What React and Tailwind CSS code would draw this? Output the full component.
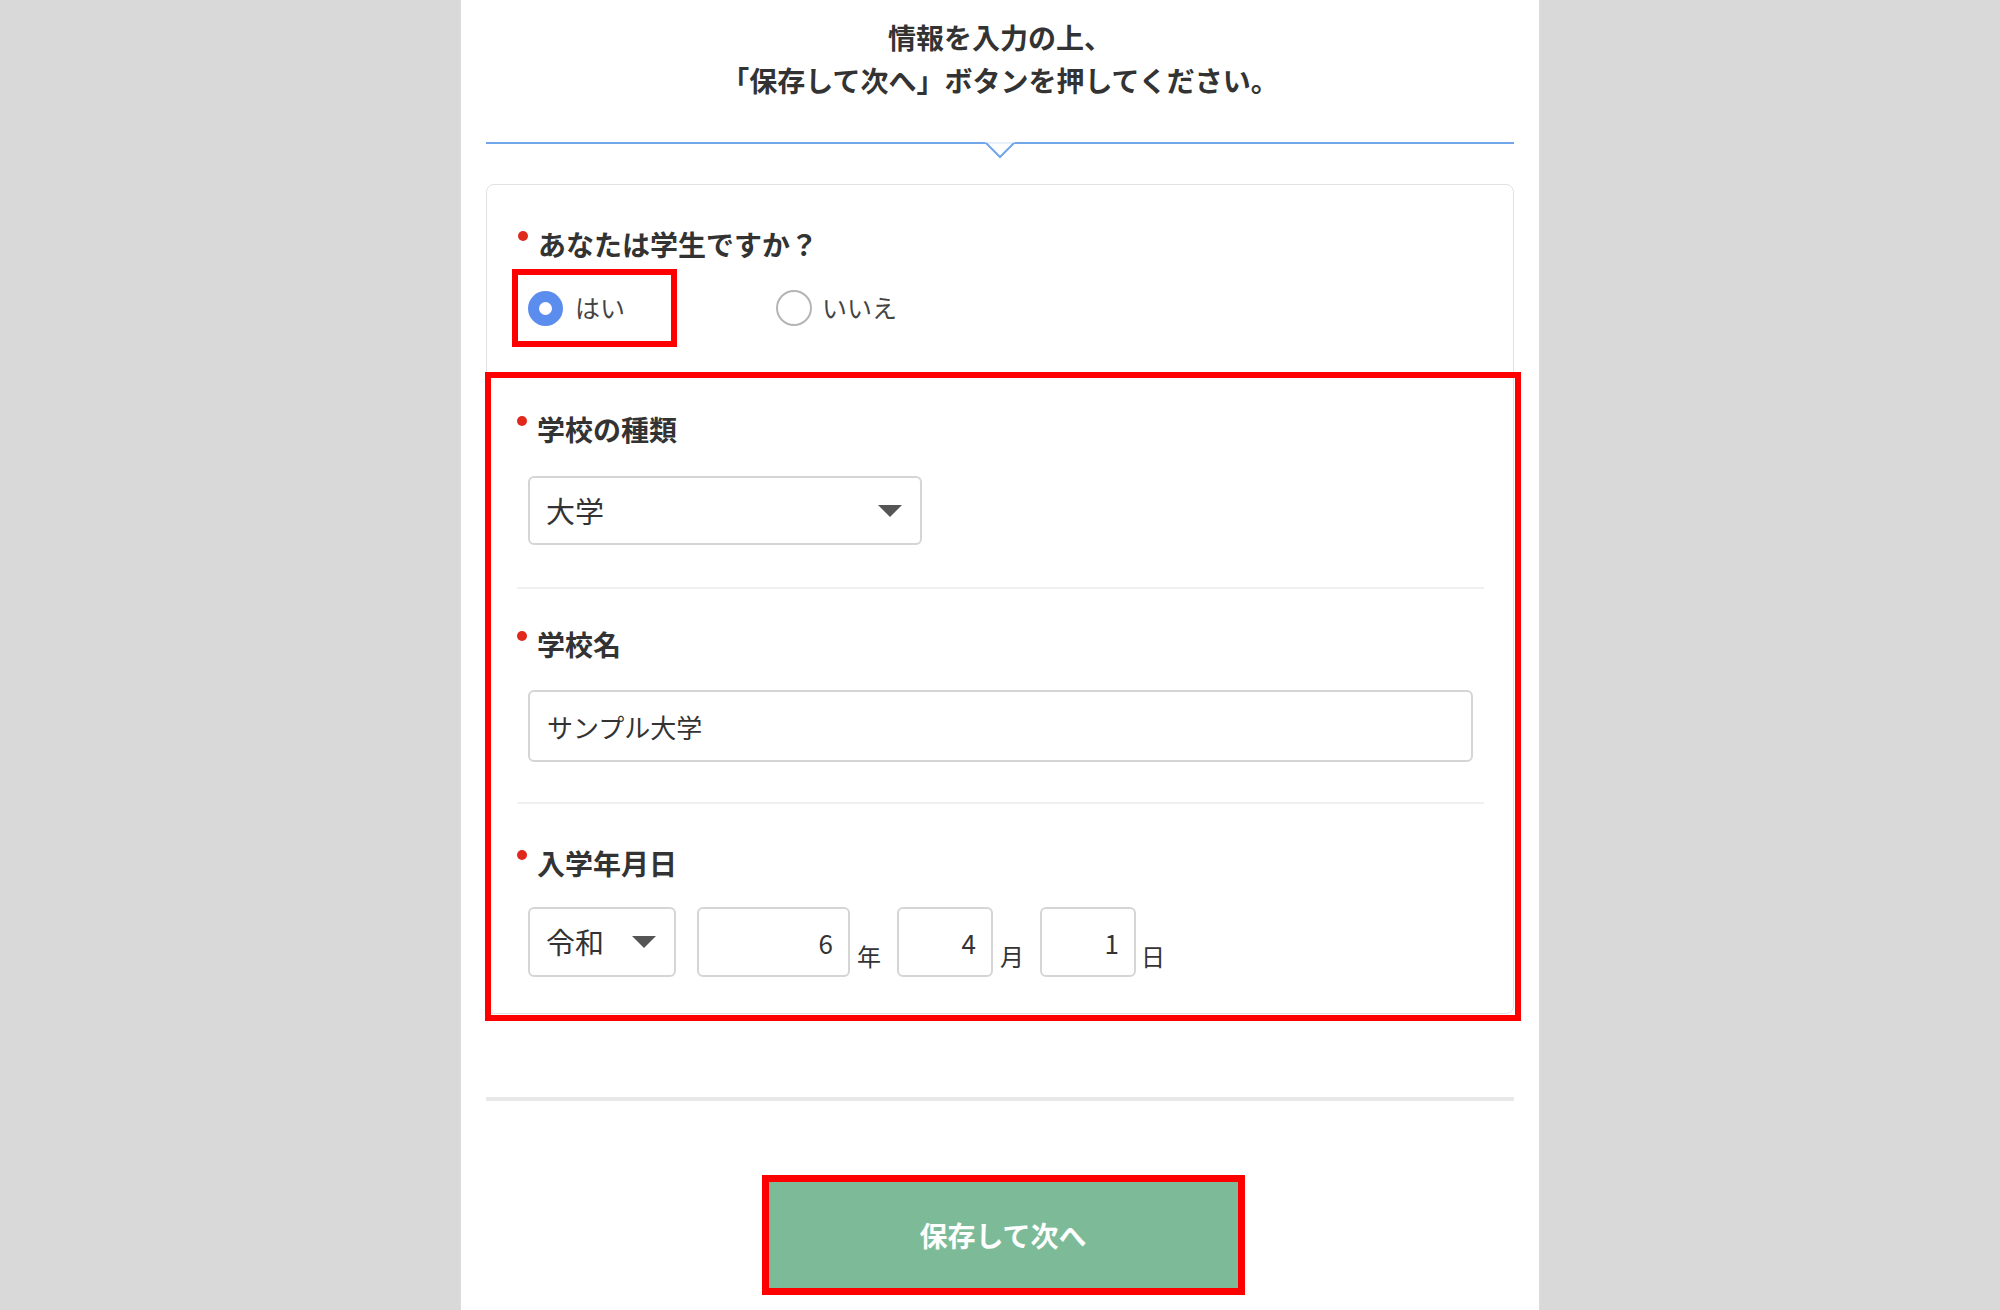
import React from 'react';

function Label({ children }) {
  return (
    <div className="flex items-start h-[39px]">
      <span className="mt-[6px] w-[10px] h-[10px] rounded-full bg-[#e0281c] shrink-0" />
      <span className="ml-[10px] text-[28px] leading-[39px] font-bold text-[#333]">{children}</span>
    </div>
  );
}

function Arrow() {
  return (
    <svg width="24" height="12" viewBox="0 0 24 12" className="shrink-0">
      <polygon points="0,0 24,0 12,12" fill="#555" />
    </svg>
  );
}

function Box({ className, children }) {
  return (
    <div
      className={
        'flex items-center border-2 border-[#d5d5d5] rounded-[6px] bg-white text-[#333] ' + className
      }
    >
      {children}
    </div>
  );
}

function Unit({ children, className }) {
  return (
    <span className={'mb-[7px] text-[24px] leading-[28px] text-[#333] ' + className}>{children}</span>
  );
}

export default function App() {
  return (
    <div className="min-h-[1310px] bg-[#d9d9d9] font-['Noto_Sans_CJK_JP',sans-serif]">
      <div className="mx-auto w-[1080px] min-h-[1310px] bg-white border-x border-[#dcdcdc] px-[25px]">
        {/* header */}
        <div className="pt-[16px] text-center text-[28px] leading-[43px] font-bold text-[#333]">
          <p>情報を入力の上、</p>
          <p>「保存して次へ」ボタンを押してください。</p>
        </div>

        <div className="relative mt-[40px] h-[2px] bg-[#72a6ea]">
          <svg
            width="32"
            height="18"
            viewBox="0 0 32 18"
            className="absolute left-1/2 -translate-x-1/2 top-0"
          >
            <polygon points="1,0 31,0 16,16" fill="#fff" />
            <line x1="2" y1="1" x2="30" y2="1" stroke="#e8f0fb" strokeWidth="2" />
            <polyline points="2,1 16,15 30,1" fill="none" stroke="#72a6ea" strokeWidth="2" />
          </svg>
        </div>

        {/* form card */}
        <div className="mt-[40px] border border-[#e2e2e2] rounded-[8px]">
          <div className="pl-[31px] pt-[40px] pb-[25px]">
            <Label>あなたは学生ですか？</Label>
            <div className="mt-[5px] flex items-center">
              <div className="-ml-[6px] w-[165px] h-[78px] border-[6px] border-[#ff0000] flex items-center pl-[10px]">
                <span className="w-[35px] h-[35px] rounded-full bg-[#5b8def] flex items-center justify-center">
                  <span className="w-[13px] h-[13px] rounded-full bg-white" />
                </span>
                <span className="ml-[12px] text-[25px] text-[#444]">はい</span>
              </div>
              <div className="ml-[99px] flex items-center">
                <span className="w-[36px] h-[36px] rounded-full border-2 border-[#b5b5b5]" />
                <span className="ml-[10px] text-[25px] text-[#444]">いいえ</span>
              </div>
            </div>
          </div>

          <div className="-ml-[2px] -mr-[8px] -mb-[8px] border-[6px] border-[#ff0000]">
            <div className="pl-[26px] pr-[31px]">
              {/* school type */}
              <div className="pt-[32px] pb-[42px]">
                <Label>学校の種類</Label>
                <Box className="mt-[27px] ml-[11px] w-[394px] h-[69px] pl-[16px] pr-[18px] justify-between text-[29px]">
                  <span>大学</span>
                  <Arrow />
                </Box>
              </div>
              <div className="h-[2px] bg-[#f0f0f0]" />

              {/* school name */}
              <div className="pt-[36px] pb-[40px]">
                <Label>学校名</Label>
                <Box className="mt-[26px] mx-[11px] h-[72px] pl-[17px] text-[26px]">
                  <span>サンプル大学</span>
                </Box>
              </div>
              <div className="h-[2px] bg-[#f0f0f0]" />

              {/* enrollment date */}
              <div className="pt-[40px] pb-[38px]">
                <Label>入学年月日</Label>
                <div className="mt-[24px] ml-[11px] flex items-end">
                  <Box className="w-[148px] h-[70px] pl-[16px] pr-[18px] justify-between text-[29px]">
                    <span>令和</span>
                    <Arrow />
                  </Box>
                  <Box className="ml-[21px] w-[153px] h-[70px] justify-end pr-[15px] text-[26px]">
                    <span>6</span>
                  </Box>
                  <Unit className="ml-[7px]">年</Unit>
                  <Box className="ml-[16px] w-[96px] h-[70px] justify-end pr-[15px] text-[26px]">
                    <span>4</span>
                  </Box>
                  <Unit className="ml-[7px]">月</Unit>
                  <Box className="ml-[16px] w-[96px] h-[70px] justify-end pr-[15px] text-[26px]">
                    <span>1</span>
                  </Box>
                  <Unit className="ml-[5px]">日</Unit>
                </div>
              </div>
            </div>
          </div>
        </div>

        <div className="mt-[83px] h-[4px] bg-[#e8e8e8]" />

        <div className="mt-[74px] flex justify-center">
          <button className="ml-[6px] w-[483px] h-[120px] border-[7px] border-[#ff0000] bg-[#7dbb98] text-white text-[28px] font-bold">
            保存して次へ
          </button>
        </div>
      </div>
    </div>
  );
}
